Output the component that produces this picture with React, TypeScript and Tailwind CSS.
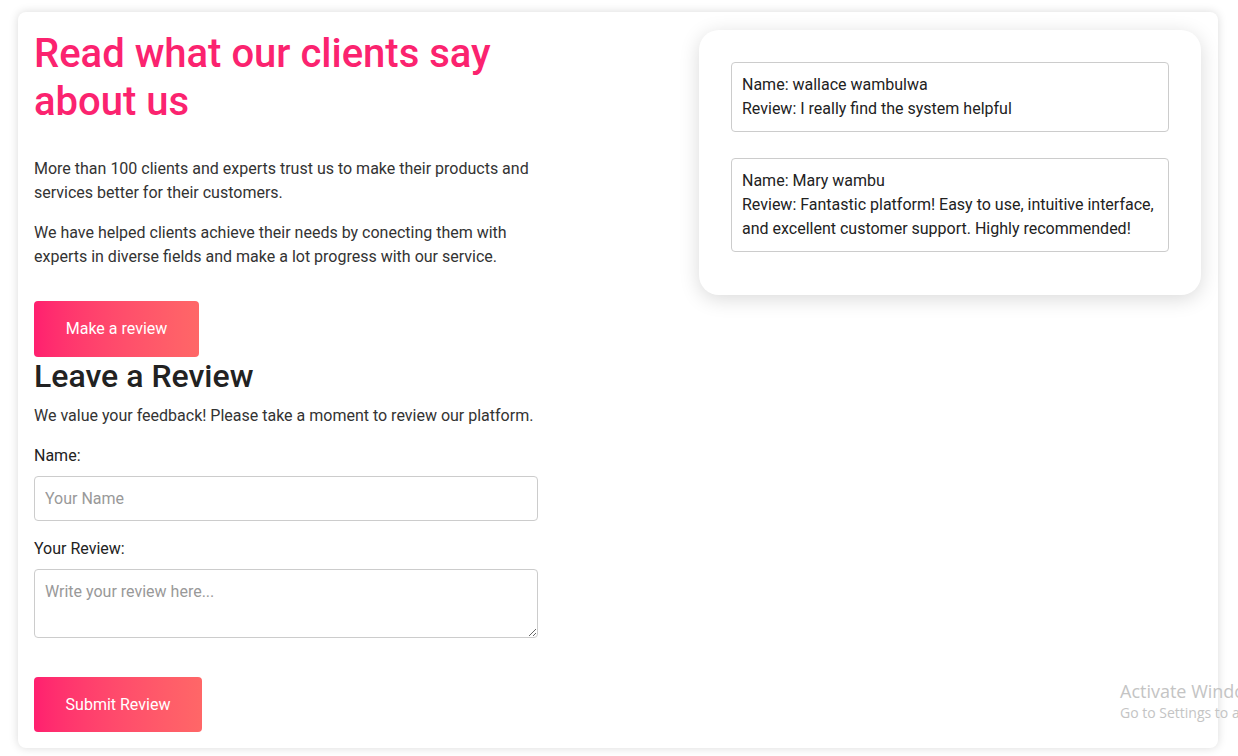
import React from "react";

export default function App() {
  return (
    <div
      className="relative min-h-[756px] w-full overflow-hidden bg-white pt-3"
      style={{ fontFamily: "Roboto, 'Liberation Sans', sans-serif" }}
    >
      <div className="ml-[18px] flex w-[1200px] items-start justify-between rounded-lg bg-white p-4 shadow-[0_0_10px_rgba(0,0,0,0.15)]">
        <div className="w-[504px]">
          <h1 className="mt-[2px] text-[40px] leading-[48px] font-medium text-[#fb236f]">
            Read what our clients say about us
          </h1>
          <p className="mt-[31px] text-base leading-6 text-[#333]">
            More than 100 clients and experts trust us to make their products and services better for their customers.
          </p>
          <p className="mt-4 text-base leading-6 text-[#333]">
            We have helped clients achieve their needs by conecting them with experts in diverse fields and make a lot progress with our service.
          </p>
          <button className="mt-[32px] h-14 w-[165px] rounded-[4px] bg-gradient-to-r from-[#ff1f6f] to-[#ff6767] text-base text-white">
            Make a review
          </button>
          <h2 className="mt-[1px] text-[32px] leading-9 font-medium text-[#222]">Leave a Review</h2>
          <p className="mt-[10px] text-base leading-6 text-[#333]">
            We value your feedback! Please take a moment to review our platform.
          </p>
          <label className="mt-4 block text-base leading-6 text-[#222]">Name:</label>
          <input
            placeholder="Your Name"
            className="mt-[8px] block h-[45px] w-full rounded-[4px] border border-[#ccc] px-[10px] text-base text-[#333] placeholder:text-[#999] outline-none"
          />
          <label className="mt-[16px] block text-base leading-6 text-[#222]">Your Review:</label>
          <textarea
            placeholder="Write your review here..."
            className="mt-[8px] block h-[69px] w-full rounded-[4px] border border-[#ccc] px-[10px] py-[10px] text-base leading-6 text-[#333] placeholder:text-[#999] outline-none"
          />
          <button className="mt-[39px] h-[55px] w-[168px] rounded-[4px] bg-gradient-to-r from-[#ff1f6f] to-[#ff6767] text-base text-white">
            Submit Review
          </button>
        </div>
        <div className="mt-[2px] mr-[1px] w-[502px] rounded-[20px] bg-white px-8 pt-8 pb-[43px] shadow-[0_4px_20px_rgba(0,0,0,0.15)]">
          <div className="rounded-[4px] border border-[#ccc] px-[10px] py-[10px] text-base leading-6 text-[#222]">
            <div>Name: wallace wambulwa</div>
            <div>Review: I really find the system helpful</div>
          </div>
          <div className="mt-[26px] rounded-[4px] border border-[#ccc] px-[10px] py-[10px] text-base leading-6 text-[#222]">
            <div>Name: Mary wambu</div>
            <div>Review: Fantastic platform! Easy to use, intuitive interface, and excellent customer support. Highly recommended!</div>
          </div>
        </div>
      </div>
      <div
        className="absolute left-[1120px] top-[679px] whitespace-nowrap text-[#c4c4c4]"
        style={{ fontFamily: "'Open Sans', 'Noto Sans', sans-serif" }}
      >
        <div className="text-[18px] leading-6">Activate Windows</div>
        <div className="text-[14px] leading-5">Go to Settings to activate Windows.</div>
      </div>
    </div>
  );
}
